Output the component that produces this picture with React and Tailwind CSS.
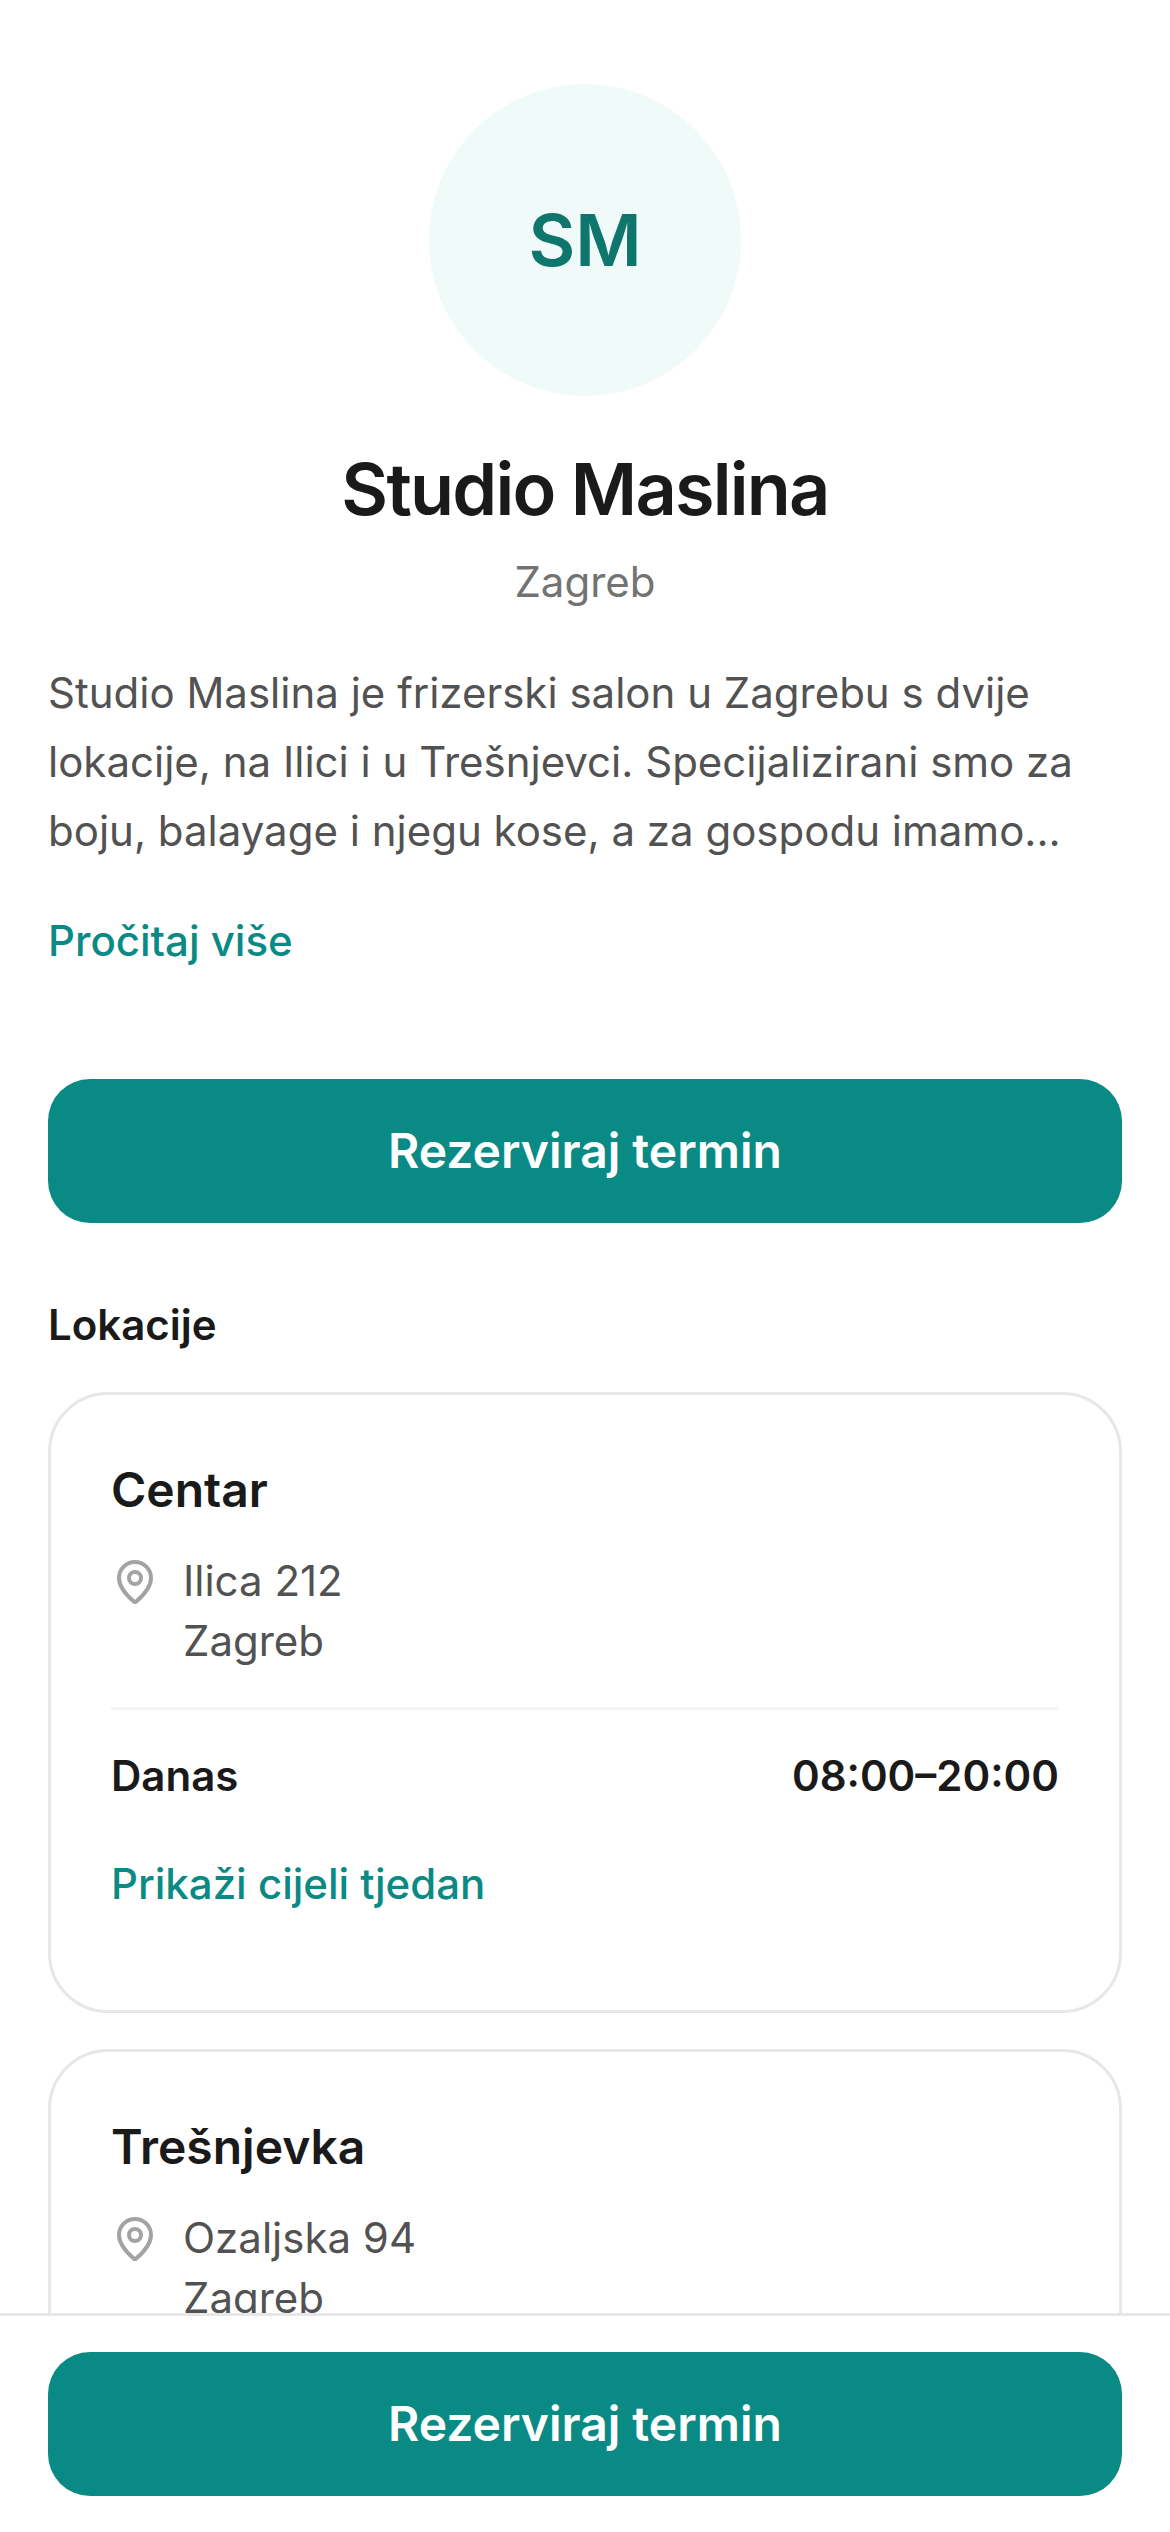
import React from 'react';
import { MapPin } from 'lucide-react';

const LocationCard = ({ name, street }) => (
    <div className="border-[3px] border-[#e7e7e6] rounded-[60px] px-[60px] pt-[59px] pb-[60px]">
        <h3 className="text-[48px] leading-[72px] font-semibold text-[#1a1a1a]">{name}</h3>
        <div className="mt-[25px] flex gap-[24px]">
            <MapPin size={48} color="#a3a3a3" className="shrink-0 mt-[7px]" />
            <div className="text-[42px] leading-[60px] text-[#525252]">
                <p>{street}</p>
                <p>Zagreb</p>
            </div>
        </div>
        <div className="mt-[36px] border-t-[3px] border-[#f4f4f3] pt-[36px] flex justify-between items-center">
            <span className="text-[42px] leading-[60px] font-semibold text-[#1a1a1a]">Danas</span>
            <span className="text-[42px] leading-[60px] font-semibold text-[#1a1a1a]">08:00–20:00</span>
        </div>
        <p className="mt-[48px] mb-[36px] text-[42px] leading-[60px] font-medium text-[#0a8a85]">Prikaži cijeli tjedan</p>
    </div>
);

const BookButton = () => (
    <button className="w-full h-[144px] rounded-[42px] bg-[#0a8a85] text-white text-[48px] font-semibold">
        Rezerviraj termin
    </button>
);

const App = () => {
    return (
        <div className="relative h-[2532px] overflow-hidden bg-white font-['Inter',sans-serif]">
            <div className="px-[48px] pt-[84px]">
                <div className="flex flex-col items-center">
                    <div className="w-[312px] h-[312px] rounded-full bg-[#f0faf8] flex items-center justify-center">
                        <span className="text-[72px] font-semibold text-[#0f766e]">SM</span>
                    </div>
                    <h1 className="mt-[45px] text-[72px] leading-[96px] font-semibold tracking-[-0.025em] text-[#1a1a1a]">Studio Maslina</h1>
                    <p className="mt-[15px] text-[42px] leading-[60px] text-[#737373]">Zagreb</p>
                </div>
                <p className="mt-[46px] text-[42px] leading-[69px] text-[#525252]">
                    Studio Maslina je frizerski salon u Zagrebu s dvije lokacije, na Ilici i u Trešnjevci. Specijalizirani smo za boju, balayage i njegu kose, a za gospodu imamo...
                </p>
                <p className="mt-[46px] text-[42px] leading-[60px] font-medium text-[#0a8a85]">Pročitaj više</p>
                <div className="mt-[108px]">
                    <BookButton />
                </div>
                <h2 className="mt-[72px] text-[42px] leading-[60px] font-semibold text-[#1a1a1a]">Lokacije</h2>
                <div className="mt-[37px] flex flex-col gap-[36px]">
                    <LocationCard name="Centar" street="Ilica 212" />
                    <LocationCard name="Trešnjevka" street="Ozaljska 94" />
                </div>
            </div>
            <div className="absolute bottom-0 left-0 right-0 h-[219px] bg-white border-t-[3px] border-[#e7e7e6] px-[48px] pt-[36px]">
                <BookButton />
            </div>
        </div>
    );
};

export default App;
